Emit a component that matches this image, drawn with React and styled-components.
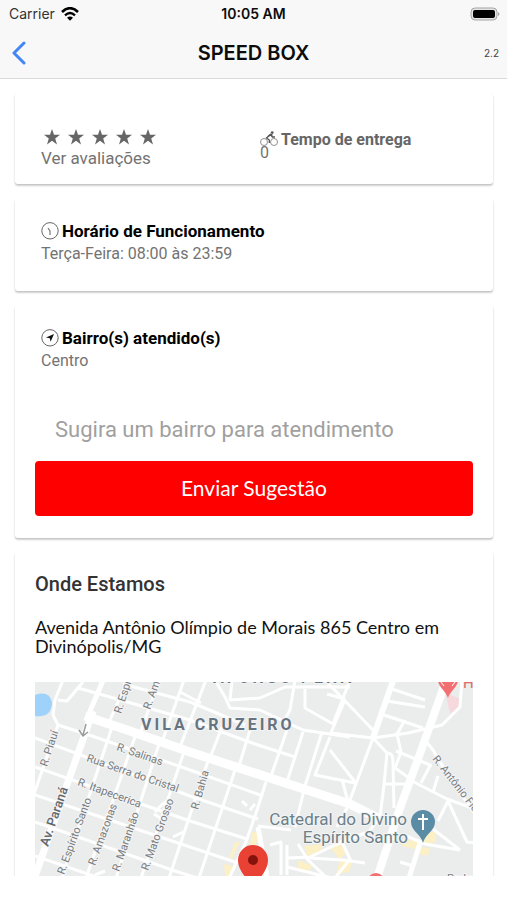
import React, { useState } from 'react';
import styled, { createGlobalStyle } from 'styled-components';

const GlobalStyle = createGlobalStyle`
    * {
        box-sizing: border-box;
    }

    body {
        margin: 0;
        background-color: #fff;
        font-family: Roboto, sans-serif;
        color: #737373;
    }
`;

const Screen = styled.div`
    height: 100vh;
    display: flex;
    flex-direction: column;
    padding-bottom: 24px; /* home indicator area */
`;

const Header = styled.header`
    background-color: #f8f8f8;
    border-bottom: 1px solid #dadada;
    font-family: Inter, sans-serif;
    color: #0c0c0c;
`;

const StatusBar = styled.div`
    display: grid;
    grid-template-columns: 1fr auto 1fr;
    align-items: center;
    height: 27px;
    padding: 0 7px;
    font-size: 14px;
`;

const Carrier = styled.div`
    display: flex;
    align-items: center;
    gap: 6px;
    padding-left: 2px;
    color: #333;
`;

const Clock = styled.div`
    font-weight: 600;
`;

const Battery = styled.svg`
    justify-self: end;
`;

const NavBar = styled.div`
    display: grid;
    grid-template-columns: 1fr auto 1fr;
    align-items: center;
    height: 51px;
    padding: 0 8px;
`;

const BackButton = styled.button`
    display: flex;
    justify-self: start;
    padding: 0 4px;
    border: none;
    background: none;
    cursor: pointer;
`;

const Title = styled.h1`
    margin: 0;
    font-size: 20px;
    font-weight: 600;
`;

const Version = styled.span`
    justify-self: end;
    font-size: 10px;
    color: #444;
`;

const Content = styled.main`
    flex: 1;
    min-height: 0;
    overflow-y: auto;
    scrollbar-width: none;
    padding: 14px 14px 14px 15px;
    display: flex;
    flex-direction: column;
    gap: 14px;
`;

const Card = styled.section`
    flex-shrink: 0;
    background-color: #fff;
    border-radius: 3px;
    padding: ${({ $padding }) => $padding};
    box-shadow: 0 2px 2px rgba(0, 0, 0, 0.16), 0 1px 2px rgba(0, 0, 0, 0.1);
`;

const Columns = styled.div`
    display: grid;
    grid-template-columns: 1fr 1fr;
    column-gap: 6px;
`;

const Stars = styled.div`
    display: flex;
    gap: 8px;
    padding: 2px 3px;
`;

const ReviewLink = styled.a`
    font-size: 17px;
    line-height: 22px;
    color: #737373;
    text-decoration: none;
`;

const Delivery = styled.div`
    padding-top: 6px;
    font-size: 16px;
    line-height: 12px;
`;

const DeliveryTitle = styled.div`
    display: flex;
    align-items: center;
    gap: 3px;
    height: 14px;
    font-weight: 700;
    color: #666;
`;

const InfoTitle = styled.h2`
    margin: 0;
    display: flex;
    align-items: center;
    gap: 3px;
    font-size: 17px;
    line-height: 23px;
    font-weight: 700;
    color: #000;
`;

const InfoText = styled.p`
    margin: 0;
    font-size: 16px;
    line-height: 22px;
`;

const InfoBlock = styled.div`
    padding: 0 6px;
`;

const Form = styled.form`
    margin-top: 25px;
`;

const Input = styled.input`
    display: block;
    width: 100%;
    height: 64px;
    padding: 0 20px;
    border: none;
    outline: none;
    background: transparent;
    font-family: Roboto, sans-serif;
    font-size: 22px;

    &::placeholder {
        color: #a0a0a0;
        opacity: 1;
    }
`;

const SubmitButton = styled.button`
    display: block;
    width: 100%;
    height: 55px;
    padding-bottom: 4px;
    border: none;
    border-radius: 4px;
    background-color: #fe0000;
    color: #fff;
    font-family: Lato, sans-serif;
    font-size: 21px;
    cursor: pointer;
`;

const SectionTitle = styled.h2`
    margin: 0 0 22px;
    font-size: 20px;
    line-height: 24px;
    font-weight: 500;
    color: #333;
`;

const Address = styled.p`
    margin: 0 0 26px;
    font-family: Lato, sans-serif;
    font-size: 18px;
    line-height: 19px;
    color: #111;
`;

const Map = styled.svg`
    display: block;
    width: 100%;
    height: 240px;
    background-color: #ebecec;
    font-family: Roboto, sans-serif;
`;

const StreetName = styled.text`
    font-size: ${({ $big }) => ($big ? 13 : 11)}px;
    font-weight: ${({ $big }) => ($big ? 500 : 400)};
    fill: ${({ $big }) => ($big ? '#5f676c' : '#777c80')};
    stroke: #f4f4f4;
    stroke-width: 2px;
    paint-order: stroke;
`;

const District = styled.text`
    font-size: 16px;
    font-weight: 700;
    letter-spacing: 3px;
    fill: #667380;
    stroke: #f4f4f4;
    stroke-width: 2px;
    paint-order: stroke;
`;

const Place = styled.text`
    font-size: 17px;
    text-anchor: end;
    fill: #6b7f89;
    stroke: #f4f4f4;
    stroke-width: 2px;
    paint-order: stroke;
`;

const avenues = [
    { width: 9, d: 'M50 34L95 49L155 70L235 96L315 122L345 137' },
    { width: 7, d: 'M58 29L34 97L5 180L-14 236' },
    { width: 5, d: 'M69 -4L53 34' },
    { width: 8, d: 'M412 -4L382 80L365 126L343 193L328 240' },
    { width: 6, d: 'M359 -4L338 56' },
    { width: 5, d: 'M386 158L375 193L360 240' },
    { width: 5, d: 'M223 145L231 190L240 240' },
];

const streets = [
    // north to south, west side
    'M28 -2L20 18L18 33L23 43L-2 115',
    'M77 45L28 193L12 240',
    'M101 52L52 193L36 240',
    'M124 62L82 193L66 240',
    'M149 70L107 193L91 240',
    'M174 76L135 193L119 240',
    'M200 88L165 193L149 240',
    'M231 100L222 128L211 160L190 205',
    'M93 -2L74 40',
    'M124 -2L105 52',
    'M149 -2L127 60',
    'M171 -2L145 65',
    'M187 45L175 76',
    'M215 48L204 84',
    'M252 48L236 94',
    'M268 50L252 100',
    'M287 50L270 104L260 145',
    // west to east
    'M23 43L60 55L155 88L228 114',
    'M0 56L155 114L223 137',
    'M0 85L155 139L212 157',
    'M0 113L155 165L203 181',
    'M0 140L140 189L230 217',
    'M0 174L120 215',
    'M43 6L75 15L155 38L187 50L220 62L260 75',
    'M88 2L155 20L184 32L210 43',
    'M23 18L32 19L48 0',
    'M145 10L166 21',
    // centre
    'M180 -2L190 15L195 26L225 28L268 48L315 55',
    'M197 -2L195 18L225 16L250 5L315 5',
    'M260 -2L255 28L249 39',
    'M270 7L270 26L298 42L315 -2',
    'M295 51L338 56L373 51L407 43L425 25L427 -2',
    'M290 -2L338 48',
    'M310 18L295 53',
    'M292 12L310 17',
    'M295 55L280 93L320 101',
    'M295 68L320 100M307 97L314 124',
    'M338 56L312 126L302 145',
    'M338 56L352 71L349 103L345 135L330 155',
    'M353 71Q358 71 358 80L359 126',
    'M350 102L370 102',
    'M349 33L388 46',
    'M352 19L390 25M357 7L390 18',
    'M370 38L362 52L366 70L360 86L377 98',
    'M361 69L395 83',
    'M396 82L386 101M403 94L398 110',
    'M390 58L398 68L414 95L440 132',
    'M375 98L412 117L440 127',
    'M413 119L432 160L439 161M413 119L403 139',
    'M369 153L390 162L425 168M398 147L425 168',
    'M365 180L378 184',
    'M223 144L256 148M235 163L246 160L246 193',
    'M215 128L220 122M212 124L207 119',
    // old town around the cathedral
    'M253 176L275 175L300 163L330 151',
    'M252 163L252 193M252 185L305 198',
    'M263 162L273 178L292 196',
    'M306 158L315 177L300 196',
    'M275 176L308 178L330 181',
    'M120 130Q128 121 132 119M119 132L130 139',
    'M138 155L148 150M60 193L70 189',
];

const blocks = [
    'M200 160L205 160L197 177L194 175Z',
    'M217 150L224 151L221 163L215 163Z',
    'M189 182L199 184L196 194L190 194Z',
    'M269 164L288 162L286 170L272 174Z',
    'M263 178L278 184L272 190L263 187Z',
    'M295 165L306 160L312 171L304 177Z',
    'M305 178L318 178L314 190L301 192Z',
    'M369 157L386 160L384 168L367 164Z',
    'M388 150L402 150L400 160L389 163Z',
    'M386 165L395 166L393 174L384 172Z',
];

const StarIcon = () => (
    <svg width="16" height="16" viewBox="0 0 16 16" fill="#666" aria-hidden="true">
        <path d="M8 0L10 5.8H16L11.2 9.4L13 15.4L8 11.8L3 15.4L4.8 9.4L0 5.8H6Z" />
    </svg>
);

const BikeIcon = () => (
    <svg width="18" height="18" viewBox="0 0 18 18" fill="none" aria-hidden="true">
        <circle cx="4" cy="11" r="3.5" stroke="#909090" />
        <circle cx="14" cy="11" r="3.5" stroke="#909090" />
        <path d="M12.5 4L10.5 3.5L6.5 7L9.3 9V12" stroke="#555" strokeWidth="1.3" />
        <path d="M8 5.5L10.5 3.5L12.5 6H15" stroke="#555" strokeWidth="1.5" />
        <circle cx="12.2" cy="1.6" r="1.4" fill="#555" />
    </svg>
);

const ClockIcon = () => (
    <svg width="18" height="20" viewBox="0 0 18 20" fill="none" aria-hidden="true">
        <circle cx="9" cy="8.8" r="8.2" stroke="#666" />
        <path d="M7 6L9 9V13" stroke="#777" strokeWidth="1.2" />
    </svg>
);

const NavigateIcon = () => (
    <svg width="18" height="20" viewBox="0 0 18 20" fill="none" aria-hidden="true">
        <circle cx="9" cy="8.8" r="8.2" stroke="#666" />
        <path d="M13 5L9.6 12.8L8.8 9.2L5 8.5Z" fill="#111" />
    </svg>
);

const WifiIcon = () => (
    <svg width="18" height="14" viewBox="0 0 18 14" fill="none" aria-hidden="true">
        <path d="M1 5Q9 -2.6 17 5" stroke="#000" strokeWidth="2.6" />
        <path d="M4 8.4Q9 3.8 14 8.4" stroke="#000" strokeWidth="2.4" />
        <path d="M9 13.8L6 10.8Q9 8.2 12 10.8Z" fill="#000" />
    </svg>
);

const LocationMap = () => (
    <Map
        viewBox="0 0 438 240"
        preserveAspectRatio="xMidYMin slice"
        role="img"
        aria-label="Mapa"
    >
        <path d="M0 13Q14 8 17 20Q17 36 0 34Z" fill="#9fd2fb" />
        <path d="M410 10L427 18L423 29L415 31Z" fill="#f5d9dc" />
        {blocks.map((d) => (
            <path key={d} d={d} fill="#fbf0c6" />
        ))}
        <g fill="none" stroke="#fff" strokeLinejoin="round">
            {streets.map((d) => (
                <path key={d} d={d} strokeWidth="3" />
            ))}
            {avenues.map(({ d, width }) => (
                <path key={d} d={d} strokeWidth={width} />
            ))}
        </g>
        <path d="M51 42L48 53M44 48L48 54L53 50" stroke="#999" strokeWidth="1.5" fill="none" />

        <StreetName transform="translate(12 85) rotate(-72)">R. Piauí</StreetName>
        <StreetName $big transform="translate(13 165) rotate(-71)">
            Av. Paraná
        </StreetName>
        <StreetName transform="translate(29 193) rotate(-70)">R. Espírito Santo</StreetName>
        <StreetName transform="translate(60 184) rotate(-70)">R. Amazonas</StreetName>
        <StreetName transform="translate(84 190) rotate(-71)">R. Maranhão</StreetName>
        <StreetName transform="translate(113 189) rotate(-70)">R. Mato Grosso</StreetName>
        <StreetName transform="translate(163 128) rotate(-74)">R. Bahia</StreetName>
        <StreetName transform="translate(86 32) rotate(-72)">R. Espírito Santo</StreetName>
        <StreetName transform="translate(115 28) rotate(-70)">R. Amazonas</StreetName>
        <StreetName transform="translate(81 68) rotate(19)">R. Salinas</StreetName>
        <StreetName transform="translate(51 79) rotate(19)">Rua Serra do Cristal</StreetName>
        <StreetName transform="translate(42 103) rotate(20)">R. Itapecerica</StreetName>
        <StreetName transform="translate(397 77) rotate(52)">R. Antônio Fidélis</StreetName>
        <District x="106" y="48">VILA CRUZEIRO</District>
        <District x="178" y="1">AFONSO PENA</District>
        <Place x="372" y="143">Catedral do Divino</Place>
        <Place x="373" y="161">Espírito Santo</Place>

        <path d="M388 161C386 152 376 149 376 140A12 12 0 0 1 400 140C400 149 390 152 388 161Z" fill="#5b8ca5" />
        <path d="M388 132V148M383 137H393" stroke="#fff" strokeWidth="2" />

        <path d="M413 16C411 9 403 5 403 -2H423C423 5 415 9 413 16Z" fill="#f27072" />
        <path d="M406 0L409 4M420 0L417 4" stroke="#fff" strokeWidth="1" />
        <text x="428" y="6" fontSize="15" fill="#e0696b">H</text>
        <circle cx="341" cy="200" r="9" fill="#f27072" />
        <StreetName x="412" y="200">Padaria</StreetName>

        <path d="M218 210C216 198 203 191 203 178A15 15 0 0 1 233 178C233 191 220 198 218 210Z" fill="#e94235" />
        <circle cx="218" cy="178" r="5" fill="#86120d" />
    </Map>
);

const App = () => {
    const [suggestion, setSuggestion] = useState('');

    const handleSubmit = (e) => {
        e.preventDefault();
        setSuggestion('');
    };

    return (
        <Screen>
            <GlobalStyle />
            <Header>
                <StatusBar>
                    <Carrier>
                        Carrier
                        <WifiIcon />
                    </Carrier>
                    <Clock>10:05 AM</Clock>
                    <Battery width="30" height="14" viewBox="0 0 30 14" aria-hidden="true">
                        <rect x="1" y="1" width="26" height="12" rx="4" fill="#e4e4e4" stroke="#a5a5a5" />
                        <rect x="3" y="3" width="22" height="8" rx="2" fill="#000" />
                        <path d="M28 5Q31 7 28 9Z" fill="#a5a5a5" />
                    </Battery>
                </StatusBar>
                <NavBar>
                    <BackButton type="button" aria-label="Voltar">
                        <svg width="16" height="24" viewBox="0 0 16 24" fill="none">
                            <path d="M12 2L2 12L12 22" stroke="#4387f5" strokeWidth="3" strokeLinecap="round" strokeLinejoin="round" />
                        </svg>
                    </BackButton>
                    <Title>SPEED BOX</Title>
                    <Version>2.2</Version>
                </NavBar>
            </Header>

            <Content>
                <Card $padding="34px 20px 15px 26px">
                    <Columns>
                        <div>
                            <Stars>
                                {[1, 2, 3, 4, 5].map((n) => (
                                    <StarIcon key={n} />
                                ))}
                            </Stars>
                            <ReviewLink href="#">Ver avaliações</ReviewLink>
                        </div>
                        <Delivery>
                            <DeliveryTitle>
                                <BikeIcon />
                                Tempo de entrega
                            </DeliveryTitle>
                            0
                        </Delivery>
                    </Columns>
                </Card>

                <Card $padding="22px 20px 26px">
                    <InfoBlock>
                        <InfoTitle>
                            <ClockIcon />
                            Horário de Funcionamento
                        </InfoTitle>
                        <InfoText>Terça-Feira: 08:00 às 23:59</InfoText>
                    </InfoBlock>
                </Card>

                <Card $padding="22px 20px">
                    <InfoBlock>
                        <InfoTitle>
                            <NavigateIcon />
                            Bairro(s) atendido(s)
                        </InfoTitle>
                        <InfoText>Centro</InfoText>
                    </InfoBlock>
                    <Form onSubmit={handleSubmit}>
                        <Input
                            type="text"
                            aria-label="Sugira um bairro para atendimento"
                            placeholder="Sugira um bairro para atendimento"
                            value={suggestion}
                            onChange={(e) => setSuggestion(e.target.value)}
                        />
                        <SubmitButton type="submit">Enviar Sugestão</SubmitButton>
                    </Form>
                </Card>

                <Card $padding="20px">
                    <SectionTitle>Onde Estamos</SectionTitle>
                    <Address>
                        Avenida Antônio Olímpio de Morais 865 Centro em Divinópolis/MG
                    </Address>
                    <LocationMap />
                </Card>
            </Content>
        </Screen>
    );
};

export default App;
